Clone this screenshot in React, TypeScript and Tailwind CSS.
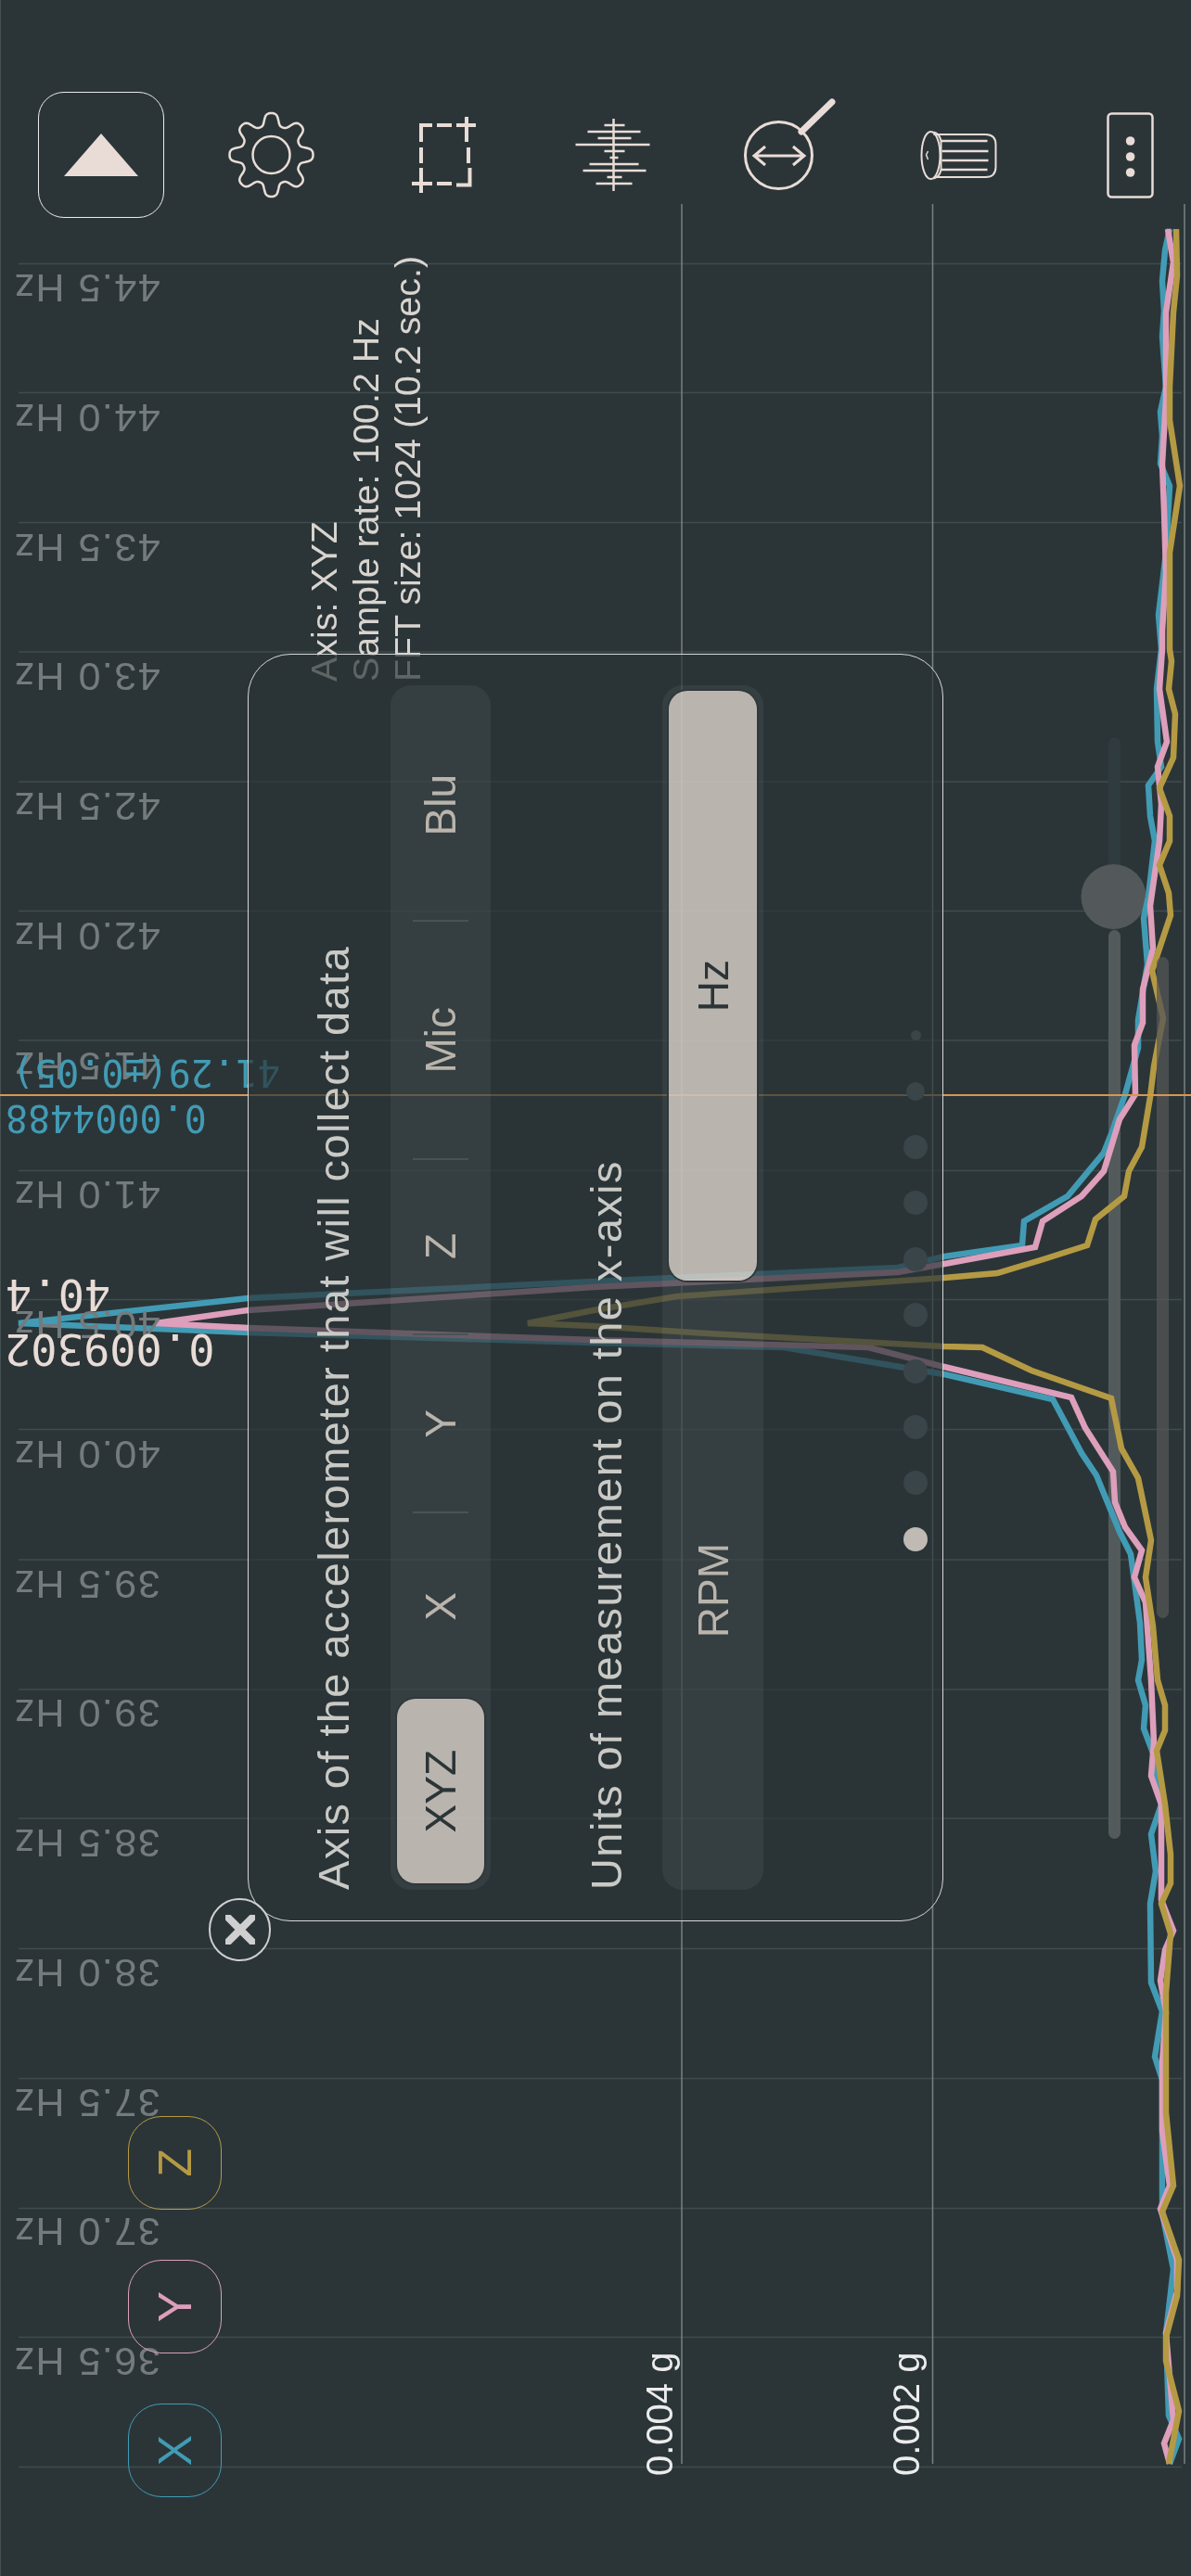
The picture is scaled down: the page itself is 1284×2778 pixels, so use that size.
const sans = "font-['Liberation_Sans',Arial,sans-serif]";
const mono = "font-['DejaVu_Sans_Mono',monospace]";
const vertical = "[writing-mode:vertical-rl] rotate-180";

const hzLabels = ["44.5", "44.0", "43.5", "43.0", "42.5", "42.0", "41.5", "41.0", "40.5", "40.0", "39.5", "39.0", "38.5", "38.0", "37.5", "37.0", "36.5"];
const gridYs = [284.6, 423.5, 563.6, 703, 843, 982.6, 1122, 1262.4, 1401.6, 1541.6, 1682, 1822, 1961, 2101.5, 2241.6, 2381.6, 2520.5, 2660.4];

const teal =
  "1261,247 1256,270 1253,303 1255,335 1253,363 1257,417 1251,444 1253,470 1251,500 1261,524 1257,596 1253,630 1249,663 1252,700 1247,743 1248,800 1252,827 1238,847 1240,880 1245,907 1238,967 1233,990 1237,1040 1227,1100 1227,1130 1213,1180 1198,1223 1190,1243 1151,1290 1104,1317 1102,1343 1018,1355 968,1367 640,1382 267,1400 20,1427 267,1437 640,1448 845,1453 1018,1482 1135,1509 1166,1567 1182,1591 1207,1652 1219,1676 1229,1750 1231,1790 1227,1812 1235,1839 1233,1864 1244,1893 1252,1946 1241,1978 1246,2018 1240,2053 1241,2138 1253,2169 1245,2218 1253,2243 1253,2327 1253,2387 1265,2447 1257,2516 1260,2605 1271,2630 1261,2657";
const pink =
  "1259,247 1265,283 1257,337 1257,430 1253,500 1255,551 1257,618 1253,680 1253,700 1250,743 1258,800 1248,827 1252,867 1250,907 1240,977 1243,1023 1232,1067 1232,1103 1223,1127 1224,1180 1207,1207 1190,1263 1166,1290 1124,1317 1116,1345 1018,1363 968,1372 640,1388 267,1413 168,1427 267,1432 640,1445 936,1453 1018,1474 1155,1507 1170,1540 1200,1587 1202,1620 1213,1647 1231,1672 1223,1701 1235,1728 1241,1812 1244,1879 1241,1915 1252,1946 1252,2049 1265,2082 1256,2103 1251,2136 1257,2170 1253,2223 1253,2298 1261,2357 1251,2382 1269,2437 1269,2471 1257,2516 1265,2610 1255,2635 1261,2657";
const gold =
  "1268,247 1269,297 1265,337 1261,417 1261,453 1272,524 1261,596 1261,700 1263,713 1260,743 1267,770 1265,817 1250,850 1261,880 1261,907 1250,933 1260,963 1262,987 1242,1047 1254,1098 1244,1150 1240,1183 1231,1237 1217,1263 1212,1290 1181,1315 1172,1343 1125,1358 1075,1373 1018,1378 730,1398 640,1413 569,1427 640,1430 763,1438 1018,1452 1059,1453 1112,1478 1198,1508 1209,1562 1227,1594 1241,1661 1235,1701 1243,1754 1248,1812 1256,1839 1256,1866 1247,1888 1256,1946 1262,2000 1262,2031 1252,2053 1262,2085 1257,2149 1257,2278 1265,2357 1253,2385 1271,2437 1269,2476 1257,2521 1257,2546 1271,2600 1260,2657";

const gearPath = (() => {
  const cx = 292;
  const cy = 167;
  let d = "";
  for (let i = 0; i < 360; i += 2) {
    const t = (i * Math.PI) / 180;
    const r = 38.5 + 6.5 * (Math.tanh(1.6 * Math.cos(8 * t)) / Math.tanh(1.6));
    d += `${i === 0 ? "M" : "L"}${(cx + r * Math.sin(t)).toFixed(1)} ${(cy - r * Math.cos(t)).toFixed(1)} `;
  }
  return d + "Z";
})();

const fftRows = [
  [651, 673, 135],
  [633, 690, 142],
  [644, 680, 149],
  [620, 700, 156],
  [651, 673, 163],
  [657, 666, 170],
  [635, 688, 177],
  [628, 696, 184],
  [654, 670, 191],
  [642, 681, 198],
];

function ToolIcon({ left, children }: { left: number; children: React.ReactNode }) {
  // slot svg uses page coordinates so the paths can be read off the screenshot
  return (
    <svg viewBox={`${left} 99 136 136`} className="h-[136px] w-[136px] shrink-0 overflow-visible" fill="none" stroke="#e9dcd6">
      {children}
    </svg>
  );
}

function Toolbar() {
  return (
    <div className="relative flex gap-[48.5px] pl-[41px] pt-[99px]">
      <div className="flex h-[136px] w-[136px] shrink-0 items-center justify-center rounded-[28px] border-[1.5px] border-[#ececec]">
        <svg viewBox="0 0 80 46" className="h-[46px] w-[80px]">
          <polygon points="40,0 80,46 0,46" fill="#e9dcd6" />
        </svg>
      </div>
      <ToolIcon left={225.5}>
        <path d={gearPath} strokeWidth="2.5" />
        <circle cx="292" cy="167" r="20" strokeWidth="2.5" />
      </ToolIcon>
      <ToolIcon left={410}>
        <path
          d="M454 153V135H466M471 135H487M492 135H513M503 126V153M454 159V176M505 159V176M454 181V208M444 198H466M471 198H487M492 199.5H506.5V181"
          strokeWidth="4"
        />
      </ToolIcon>
      <ToolIcon left={594.5}>
        <path d="M661 128V206" strokeWidth="2.5" />
        {fftRows.map(([a, b, y]) => (
          <path key={y} d={`M${a} ${y}H${b}`} strokeWidth="2.5" />
        ))}
      </ToolIcon>
      <ToolIcon left={779}>
        <circle cx="839.5" cy="167.5" r="36" strokeWidth="3" />
        <path d="M864 142L897 110" strokeWidth="7" strokeLinecap="round" />
        <path d="M813 168H867M825 158L813 168L825 178M855 158L867 168L855 178" strokeWidth="3" />
      </ToolIcon>
      <ToolIcon left={963.5}>
        <ellipse cx="1003" cy="167.5" rx="10" ry="25.5" strokeWidth="2" />
        <path d="M1006 142.5C1010 143.5 1013 147 1014 152V183C1013 188 1010 191.5 1006 192.5" strokeWidth="2" />
        <path d="M1006 145H1062Q1073 145 1073 156V180Q1073 191 1062 191H1008" strokeWidth="2" />
        <path d="M1014 152H1064M1015 163H1065M1015 173H1065M1014 183H1064" strokeWidth="2.5" />
        <path d="M1000 163L998 167L1000 172" strokeWidth="1.5" />
      </ToolIcon>
      <ToolIcon left={1148}>
        <rect x="1194.5" y="122.5" width="48" height="90" rx="4" strokeWidth="2.5" />
        <circle cx="1218.6" cy="152" r="4.8" fill="#e9dcd6" stroke="none" />
        <circle cx="1218.6" cy="169" r="4.8" fill="#e9dcd6" stroke="none" />
        <circle cx="1218.6" cy="186" r="4.8" fill="#e9dcd6" stroke="none" />
      </ToolIcon>
    </div>
  );
}

function Segment({ label, h }: { label: string; h: string }) {
  return (
    <div className={`flex w-full shrink-0 items-center justify-center text-[#b9b4ac] ${h}`}>
      <span className={`${vertical} text-[46px] leading-[50px]`}>{label}</span>
    </div>
  );
}

// the selected pill lets the plot shine through it, hence the screen blend
function ActiveSegment({ label, h }: { label: string; h: string }) {
  return (
    <div className={`grid w-full shrink-0 rounded-[20px] ring-[2px] ring-[#2f393c] ${h}`}>
      <div className="rounded-[20px] bg-[#a79c91] mix-blend-screen [grid-area:1/1]" />
      <div className="flex items-center justify-center text-[#2b3538] [grid-area:1/1]">
        <span className={`${vertical} text-[46px] leading-[50px]`}>{label}</span>
      </div>
    </div>
  );
}

function Sep() {
  return <div className="mx-auto h-[2px] w-[60px] shrink-0 bg-[#4a5255]" />;
}

function PanelLabel({ children }: { children: React.ReactNode }) {
  return <div className={`${vertical} h-full w-[60px] shrink-0 whitespace-nowrap text-[47px] leading-[60px] tracking-[1.4px] text-[#c9c9c5]`}>{children}</div>;
}

function SettingsPanel() {
  return (
    <div className={`absolute left-[267px] top-[705px] flex h-[1367px] w-[750px] rounded-[46px] border-[1.5px] border-[#d8d8d8] bg-[#2b3538]/70 py-[33px] pl-[62px] ${sans}`}>
      <PanelLabel>Axis of the accelerometer that will collect data</PanelLabel>
      <div className="ml-[31px] flex h-full w-[108px] shrink-0 flex-col rounded-[22px] bg-white/5 px-[7px] py-[6px]">
        <Segment label="Blu" h="h-[247px]" />
        <Sep />
        <Segment label="Mic" h="h-[255px]" />
        <Sep />
        <Segment label="Z" h="h-[187px]" />
        <Sep />
        <Segment label="Y" h="h-[190px]" />
        <Sep />
        <Segment label="X" h="h-[200px]" />
        <ActiveSegment label="XYZ" h="h-[199px]" />
      </div>
      <div className="ml-[95px]">
        <PanelLabel>Units of measurement on the x-axis</PanelLabel>
      </div>
      <div className="ml-[30px] flex h-full w-[109px] shrink-0 flex-col rounded-[22px] bg-white/5 px-[7px] py-[6px]">
        <ActiveSegment label="Hz" h="h-[636px]" />
        <Segment label="RPM" h="h-[650px] pt-[18px]" />
      </div>
      <div className="ml-[151px] mt-[347px] flex w-[26px] shrink-0 flex-col items-center">
        {[11, 20, 26, 26, 26, 26, 26, 26, 26].map((size, i) => (
          <div key={i} className="flex h-[60.4px] items-center justify-center">
            {size === 11 && <div className="h-[11px] w-[11px] rounded-full bg-[#3a4549]" />}
            {size === 20 && <div className="h-[20px] w-[20px] rounded-full bg-[#3a4549]" />}
            {size === 26 && <div className="h-[26px] w-[26px] rounded-full bg-[#3a4549]" />}
          </div>
        ))}
        <div className="flex h-[60.4px] items-center justify-center">
          <div className="h-[26px] w-[26px] rounded-full bg-[#bfbab3]" />
        </div>
      </div>
    </div>
  );
}

function Chart() {
  return (
    <svg viewBox="0 0 1284 2778" className="absolute inset-0 h-[2778px] w-[1284px]" fill="none">
      <path d="M0.5 0V2778" stroke="#465153" strokeWidth="1" />
      {gridYs.map((y) => (
        <path key={y} d={`M20 ${y}H1274`} stroke="#3f4c4d" strokeWidth="1.5" />
      ))}
      <path d="M735 220V2657M1005.5 220V2657M1277 220V2657" stroke="#788182" strokeWidth="1.5" />
      <rect x="1195" y="795" width="13" height="210" rx="6.5" fill="#303b40" />
      <rect x="1195" y="1003" width="13" height="980" rx="6.5" fill="#525a5c" />
      <circle cx="1200.5" cy="967" r="35" fill="#53595a" />
      <polyline points={teal} stroke="#429bb4" strokeWidth="6.5" />
      <polyline points={pink} stroke="#dd9fbb" strokeWidth="6.5" />
      <polyline points={gold} stroke="#b59a44" strokeWidth="6.5" />
      <rect x="1247" y="1032" width="13" height="713" rx="6.5" fill="#555555" fillOpacity="0.75" />
      <path d="M0 1181H1284" stroke="#d9964f" strokeWidth="2" />
    </svg>
  );
}

function AxisButton({ label, cls }: { label: string; cls: string }) {
  return (
    <div className={`flex h-[101px] w-[101px] items-center justify-center rounded-[36px] border-[1.5px] ${cls}`}>
      <span className={`${vertical} text-[50px] leading-[50px]`}>{label}</span>
    </div>
  );
}

export default function App() {
  return (
    <div className={`relative h-[2778px] w-[1284px] overflow-hidden bg-[#2b3538] ${sans}`}>
      <Chart />

      {/* frequency tick labels, upside down like the rest of the rotated plot */}
      <div className="absolute left-[14px] top-[290px] flex flex-col items-start">
        {hzLabels.map((hz) => (
          <div key={hz} className="h-[139.75px]">
            <div className="rotate-180 whitespace-nowrap text-[43px] leading-[42px] tracking-[1.5px] text-[#747b7d]">{hz} Hz</div>
          </div>
        ))}
      </div>

      <div className={`absolute left-[13px] top-[1134px] rotate-180 whitespace-nowrap text-[40px] leading-[46px] text-[#429bb4] ${mono}`}>41.29(±0.05)</div>
      <div className={`absolute left-[6px] top-[1183px] rotate-180 whitespace-nowrap text-[40px] leading-[46px] text-[#429bb4] ${mono}`}>0.0004488</div>
      <div className={`absolute left-[6px] top-[1371px] rotate-180 whitespace-nowrap text-[47px] leading-[50px] text-[#e9dcd6] ${mono}`}>40.4</div>
      <div className={`absolute left-[5px] top-[1430px] rotate-180 whitespace-nowrap text-[47px] leading-[50px] text-[#e9dcd6] ${mono}`}>0.009302</div>

      <div className={`${vertical} absolute left-[327px] top-[270px] h-[465px] whitespace-nowrap text-[39.4px] leading-[45px] text-[#d9d4cf]`}>
        <div>Axis: XYZ</div>
        <div>Sample rate: 100.2 Hz</div>
        <div>FFT size: 1024 (10.2 sec.)</div>
      </div>

      <div className={`${vertical} absolute left-[689px] top-[2530px] h-[140px] whitespace-nowrap text-[40px] leading-[45px] text-[#ececec]`}>0.004 g</div>
      <div className={`${vertical} absolute left-[955px] top-[2530px] h-[140px] whitespace-nowrap text-[40px] leading-[45px] text-[#ececec]`}>0.002 g</div>

      <Toolbar />
      <SettingsPanel />

      <div className="absolute left-[225px] top-[2047px] flex h-[68px] w-[67px] items-center justify-center rounded-full border-[2.5px] border-[#cfcfcf] bg-[#2b3538]">
        <svg viewBox="0 0 32 32" className="h-[32px] w-[32px]">
          <path d="M3 3L29 29M29 3L3 29" stroke="#cfcfcf" strokeWidth="8" strokeLinecap="round" />
        </svg>
      </div>

      <div className="absolute left-[138px] top-[2282px] flex flex-col gap-[54px]">
        <AxisButton label="Z" cls="border-[#b59a44] text-[#b59a44]" />
        <AxisButton label="Y" cls="border-[#dd9fbb] text-[#dd9fbb]" />
        <AxisButton label="X" cls="border-[#429bb4] text-[#429bb4]" />
      </div>
    </div>
  );
}
